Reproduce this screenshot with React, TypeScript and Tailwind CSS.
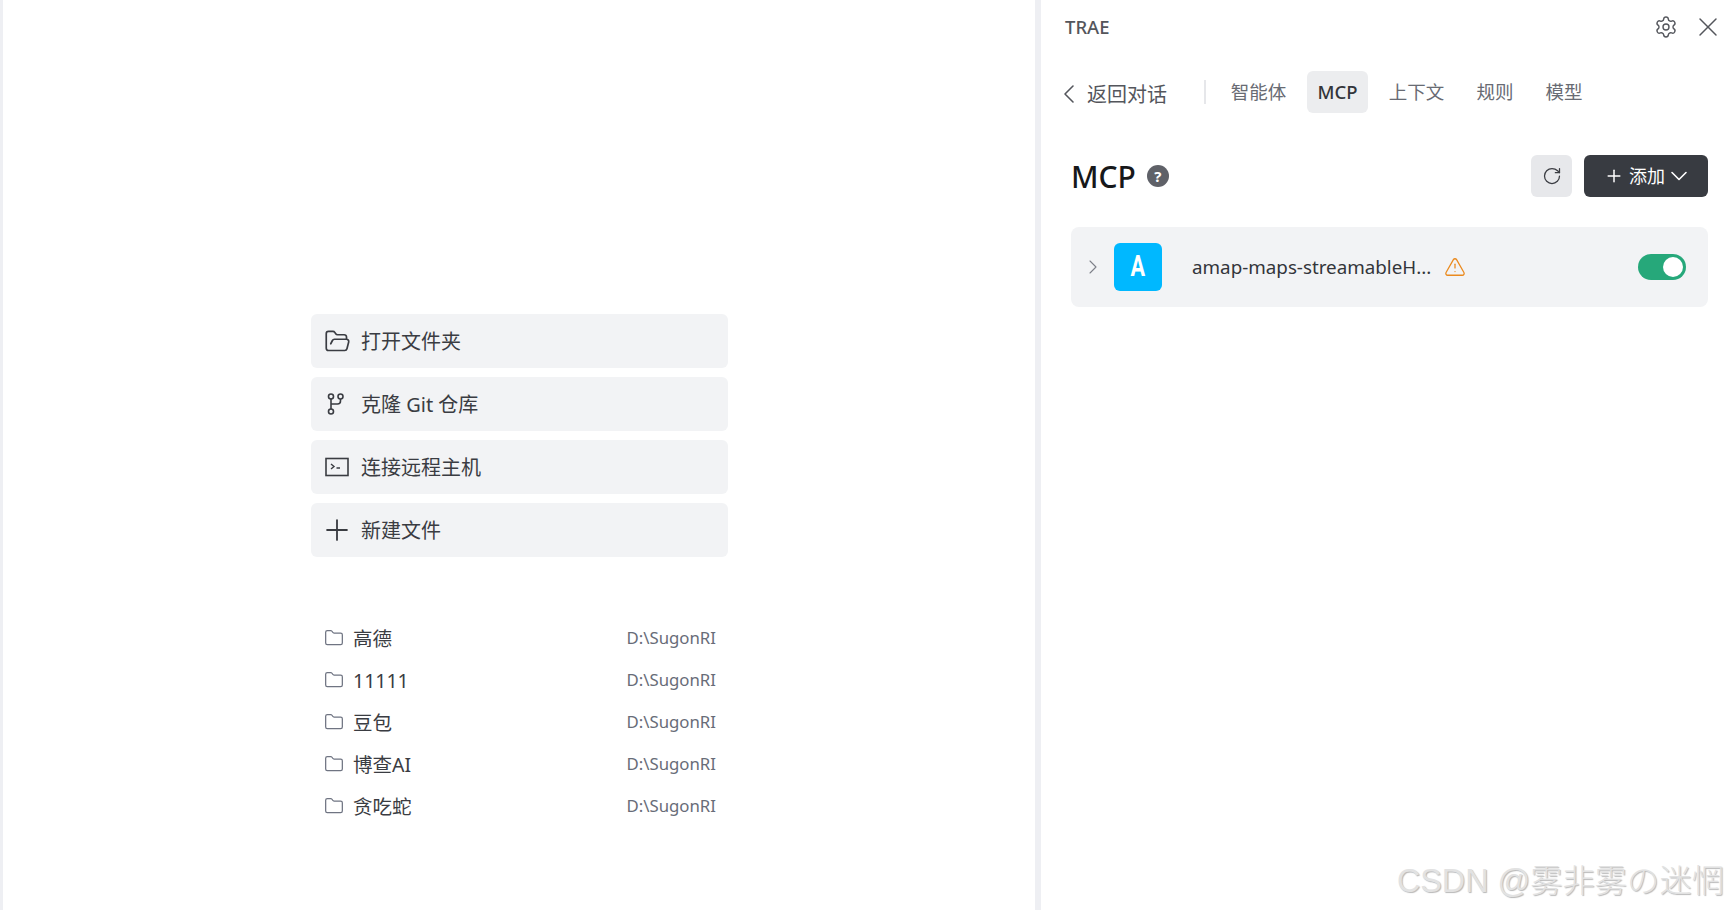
import { ChevronDown, ChevronLeft, ChevronRight, Folder, FolderOpen, Plus, RotateCw, Settings, TriangleAlert, X } from 'lucide-react';

const font = "font-['Noto_Sans','Noto_Sans_CJK_SC',sans-serif]";

function TerminalIcon() {
  return (
    <svg width="24" height="20" viewBox="0 0 24 20" fill="none" stroke="currentColor" strokeWidth="1.6">
      <rect x="1" y="1.5" width="22" height="17" />
      <path d="M6 7l3 2.5L6 12M11.5 11h3.5" strokeWidth="1.4" />
    </svg>
  );
}

function BranchIcon() {
  return (
    <svg className="ml-[-4px]" width="17" height="22" viewBox="0 0 17 22" fill="none" stroke="currentColor" strokeWidth="1.6">
      <circle cx="4" cy="3.5" r="2.5" />
      <circle cx="13.5" cy="3.5" r="2.5" />
      <circle cx="4" cy="18.5" r="2.5" />
      <path d="M4 6v10M13.5 6v2a3 3 0 0 1-3 3H4" />
    </svg>
  );
}

const actions = [
  { label: '打开文件夹', icon: <FolderOpen size={27} strokeWidth={1.5} /> },
  { label: '克隆 Git 仓库', icon: <BranchIcon /> },
  { label: '连接远程主机', icon: <TerminalIcon /> },
  { label: '新建文件', icon: <Plus size={34} strokeWidth={1.3} /> },
];

const recents = ['高德', '11111', '豆包', '博查AI', '贪吃蛇'];

const tabs = [
  { label: '智能体', className: 'ml-[25px] w-[55px]' },
  { label: 'MCP', className: 'ml-[21px] w-[61px] h-[42px] rounded-md bg-[#ecedef] text-[#33353a] font-medium' },
  { label: '上下文', className: 'ml-[21px] w-[55px]' },
  { label: '规则', className: 'ml-[33px] w-[36px]' },
  { label: '模型', className: 'ml-[33px] w-[36px]' },
];

export default function App() {
  return (
    <div className={`relative flex h-[910px] w-full overflow-hidden bg-white ${font}`}>
      <div className="w-[3px] shrink-0 bg-[#eeeff3]" />

      {/* Welcome area */}
      <main className="w-[1032px] shrink-0 pl-[308px] pt-[314px]">
        <div className="flex w-[417px] flex-col gap-[9px]">
          {actions.map((action) => (
            <button
              key={action.label}
              type="button"
              className="flex h-[54px] items-center rounded-md bg-[#f2f3f5] text-left text-[20px] text-[#3a3c42]"
            >
              <span className="flex w-[50px] shrink-0 justify-center pl-[2px] text-[#3a3c42]">{action.icon}</span>
              <span className="pt-0.5">{action.label}</span>
            </button>
          ))}
        </div>

        <ul className="mt-[60px] flex w-[417px] flex-col">
          {recents.map((name) => (
            <li key={name} className="flex h-[42px] items-center">
              <Folder size={20} strokeWidth={1.5} className="ml-[13px] shrink-0 text-[#6f7482]" />
              <span className="ml-[9px] flex-1 pt-0.5 text-[19.5px] text-[#3a3c42]">{name}</span>
              <span className="mr-[12px] text-[16.8px] text-[#686c78]">D:\SugonRI</span>
            </li>
          ))}
        </ul>
      </main>

      <div className="w-[6px] shrink-0 bg-[#eeeff3]" />

      {/* Side panel */}
      <aside className="flex flex-1 flex-col pl-[24px] pr-[21px]">
        <header className="flex h-[53px] items-center">
          <span className="flex-1 text-[18.5px] font-medium text-[#54565c]">TRAE</span>
          <Settings size={24} strokeWidth={1.4} className="text-[#54565c]" />
          <X size={32} strokeWidth={1.1} className="ml-[14px] mr-[-16px] text-[#54565c]" />
        </header>

        <nav className="mt-[18px] flex h-[42px] items-center text-[18.5px] text-[#686b73]">
          <ChevronLeft size={32} strokeWidth={1.2} className="ml-[-12px] mt-1 shrink-0 text-[#54565c]" />
          <span className="ml-[2px] mt-[6px] w-[85px] whitespace-nowrap text-[20px] text-[#54565c]">返回对话</span>
          <div className="ml-[32px] h-6 w-0.5 bg-[#e6e7ea]" />
          {tabs.map((tab) => (
            <span key={tab.label} className={`flex items-center justify-center whitespace-nowrap ${tab.className}`}>
              {tab.label}
            </span>
          ))}
        </nav>

        <div className="ml-[6px] mt-[42px] flex h-[42px] items-center">
          <h1 className="text-[30px] font-medium text-[#17181a]">MCP</h1>
          <span className="ml-[11px] flex h-[22px] w-[22px] items-center justify-center rounded-full bg-[#5f6168] text-[15px] font-bold text-white">
            ?
          </span>
          <button
            type="button"
            className="ml-auto flex h-[42px] w-[41px] items-center justify-center rounded-md bg-[#e7e8eb] text-[#3a3c42]"
          >
            <RotateCw size={20} strokeWidth={1.5} />
          </button>
          <button
            type="button"
            className="ml-3 flex h-[42px] w-[124px] items-center justify-center gap-[2px] rounded-md bg-[#383b41] text-[18px] text-white"
          >
            <Plus size={20} strokeWidth={1.8} />
            <span className="mx-[3px]">添加</span>
            <ChevronDown size={28} strokeWidth={1.4} className="mx-[-5px]" />
          </button>
        </div>

        <div className="ml-[6px] mt-[30px] flex h-[80px] items-center rounded-lg bg-[#f2f3f5] pr-[22px]">
          <ChevronRight size={24} strokeWidth={1.1} className="ml-[10px] shrink-0 text-[#7d8089]" />
          <div className="ml-[9px] flex h-12 w-12 shrink-0 items-center justify-center rounded-md bg-[#00b8ff] font-['Roboto',sans-serif] text-[29px] font-bold text-white">
            <span className="scale-x-[0.75]">A</span>
          </div>
          <span className="ml-[30px] text-[18.8px] text-[#33353a]">amap-maps-streamableH...</span>
          <TriangleAlert size={22} strokeWidth={1.4} className="ml-[13px] shrink-0 text-[#ea8a1f]" />
          <div className="ml-auto flex h-[26px] w-[48px] items-center justify-end rounded-full bg-[#26a87a] pr-[3px]">
            <span className="h-5 w-5 rounded-full bg-white" />
          </div>
        </div>
      </aside>

      {/* Watermark */}
      <span className="absolute bottom-[5px] right-[5px] font-['Liberation_Sans','Noto_Sans_CJK_JP',sans-serif] text-[32.3px] font-light text-[#e2e2e2] [text-shadow:1px_1px_1px_#b8b8b8]">
        CSDN @雾非雾の迷惘
      </span>
    </div>
  );
}
